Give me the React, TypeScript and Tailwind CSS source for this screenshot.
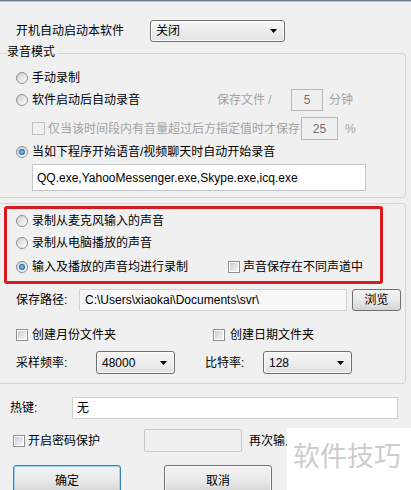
import React from 'react'

function Radio({ checked }: { checked?: boolean }) {
  return (
    <span className="flex h-[12px] w-[12px] shrink-0 items-center justify-center rounded-full border border-[#8e8f8f] bg-linear-to-br from-[#cfcfcf] to-[#ffffff]">
      {checked && <span className="h-[6px] w-[6px] rounded-full bg-radial from-[#a6dcff] via-[#2f7fc8] to-[#0a3f7a]" />}
    </span>
  )
}

function Check() {
  return (
    <span className="flex h-[12px] w-[12px] shrink-0 items-center justify-center border border-[#8f8f8f] bg-white">
      <span className="h-[8px] w-[8px] bg-linear-to-br from-[#cdcdcd] to-[#f7f7f7]" />
    </span>
  )
}

function Select({ value, w, h }: { value: string; w: string; h: string }) {
  return (
    <div className={`${w} ${h} flex items-center justify-between rounded-[3px] border border-[#707070] bg-linear-to-b from-[#f7f7f7] to-[#e2e2e2] pl-[5px] pr-[7px] shadow-[inset_0_0_0_1px_#fcfcfc]`}>
      <span>{value}</span>
      <svg width="7" height="4" viewBox="0 0 7 4">
        <path d="M0 0h7L3.5 4z" fill="#000" />
      </svg>
    </div>
  )
}

function Button({ label, main }: { label: string; main?: boolean }) {
  return (
    <div
      className={`flex h-[30px] w-[108px] items-start justify-center rounded-[3px] border pt-[8px] bg-linear-to-b from-[#f3f3f3] via-[#e9e9e9] to-[#d4d4d4] ${
        main ? 'border-[#3c7fb1] shadow-[inset_0_0_0_1px_#9fd6f2]' : 'border-[#707070] shadow-[inset_0_0_0_1px_#fbfbfb]'
      }`}
    >
      {label}
    </div>
  )
}

export default function App() {
  return (
    <div className="relative h-[490px] w-[411px] overflow-hidden bg-[#f0f0f0] text-[12px] leading-[14px] text-black font-['Liberation_Sans','Noto_Sans_CJK_SC',sans-serif]">
      <div className="h-[1px] bg-[#6d7d8f]" />
      <div className="h-[1px] bg-[#b9c6d3]" />

      <div className="mt-[18px] flex h-[22px] items-center pl-[16px]">
        <span className="w-[134px]">开机自动启动本软件</span>
        <Select value="关闭" w="w-[135px]" h="h-[22px]" />
      </div>

      {/* 录音模式 */}
      <div className="relative mr-[5px] mt-[11px] h-[145px] rounded-r-[4px] border-y border-r border-[#d5d5d5]">
        <span className="absolute left-[7px] top-[-9px] bg-[#f0f0f0] pr-[2px]">录音模式</span>
        <div className="mt-[13px] flex h-[22px] items-center pl-[16px]">
          <Radio />
          <span className="ml-[4px]">手动录制</span>
        </div>
        <div className="flex h-[22px] items-center pl-[16px]">
          <div className="flex w-[201px] items-center">
            <Radio />
            <span className="ml-[4px]">软件启动后自动录音</span>
          </div>
          <span className="w-[74px] text-[#a3a3a3]">保存文件 /</span>
          <div className="flex h-[22px] w-[32px] items-center justify-center border border-[#b8b8b8] text-[#707070]">5</div>
          <span className="ml-[6px] text-[#a3a3a3]">分钟</span>
        </div>
        <div className="mt-[6px] flex h-[23px] items-center pl-[32px]">
          <span className="flex h-[13px] w-[13px] shrink-0 border border-[#c0c0c0]" />
          <span className="ml-[3px] w-[253px] text-[#a3a3a3]">仅当该时间段内有音量超过后方指定值时才保存</span>
          <div className="flex h-[23px] w-[37px] items-center justify-center border border-[#b8b8b8] text-[#707070]">25</div>
          <span className="ml-[7px] text-[#a3a3a3]">%</span>
        </div>
        <div className="mt-[1px] flex h-[22px] items-center pl-[16px]">
          <Radio checked />
          <span className="ml-[4px]">当如下程序开始语音/视频聊天时自动开始录音</span>
        </div>
        <div className="ml-[32px] mt-[1px] h-[27px] w-[334px] border border-[#c3c7cc] bg-white pl-[4px] pt-[6px]">
          QQ.exe,YahooMessenger.exe,Skype.exe,icq.exe
        </div>
      </div>

      {/* 声音来源 / 保存 */}
      <div className="relative mr-[5px] mt-[5px] h-[181px] rounded-r-[4px] border-y border-r border-[#d5d5d5]">
        <div className="mt-[6px] flex h-[22px] items-center pl-[16px]">
          <Radio />
          <span className="ml-[4px]">录制从麦克风输入的声音</span>
        </div>
        <div className="flex h-[22px] items-center pl-[16px]">
          <Radio />
          <span className="ml-[4px]">录制从电脑播放的声音</span>
        </div>
        <div className="mt-[2px] flex h-[22px] items-center pl-[16px]">
          <div className="flex w-[212px] items-center">
            <Radio checked />
            <span className="ml-[4px]">输入及播放的声音均进行录制</span>
          </div>
          <Check />
          <span className="ml-[3px]">声音保存在不同声道中</span>
        </div>

        <div className="mt-[11px] flex h-[22px] items-center pl-[16px]">
          <span className="w-[63px]">保存路径:</span>
          <div className="flex h-[22px] w-[268px] items-center border border-[#d3d3d3] bg-[#f7f7f7] pl-[5px]">
            C:\Users\xiaokai\Documents\svr\
          </div>
          <div className="ml-[5px] flex h-[22px] w-[49px] items-center justify-center rounded-[3px] border border-[#707070] bg-linear-to-b from-[#f3f3f3] via-[#e9e9e9] to-[#d4d4d4]">
            浏览
          </div>
        </div>

        <div className="mt-[13px] flex h-[22px] items-center pl-[16px]">
          <div className="flex w-[197px] items-center">
            <Check />
            <span className="ml-[4px]">创建月份文件夹</span>
          </div>
          <Check />
          <span className="ml-[5px]">创建日期文件夹</span>
        </div>

        <div className="mt-[5px] flex h-[23px] items-center pl-[16px]">
          <span className="w-[80px]">采样频率:</span>
          <Select value="48000" w="w-[79px]" h="h-[23px]" />
          <span className="ml-[30px] w-[58px]">比特率:</span>
          <Select value="128" w="w-[89px]" h="h-[23px]" />
        </div>

        <div className="pointer-events-none absolute left-[4px] top-[2px] h-[78px] w-[379px] rounded-[3px] border-[3px] border-[#d91a1f]" />
      </div>

      <div className="mt-[13px] flex h-[22px] items-center pl-[10px]">
        <span className="w-[62px]">热键:</span>
        <div className="flex h-[22px] w-[326px] items-center border border-[#d0d0d0] bg-white pl-[4px]">无</div>
      </div>

      <div className="mt-[10px] flex h-[23px] items-center pl-[13px]">
        <div className="flex w-[131px] items-center">
          <Check />
          <span className="ml-[3px]">开启密码保护</span>
        </div>
        <div className="h-[23px] w-[98px] rounded-[2px] border border-[#c8c8c8] bg-[#f0f0f0]" />
        <span className="ml-[7px] whitespace-nowrap">再次输入</span>
      </div>

      <div className="mt-[13px] flex pl-[13px]">
        <Button label="确定" main />
        <div className="ml-[43px]">
          <Button label="取消" />
        </div>
      </div>

      <div className="absolute bottom-0 left-[287px] right-0 top-[428px] bg-white pl-[6px] pt-[13px] text-[27px] leading-[28px] text-[#cdcdcd] font-['Noto_Sans_CJK_SC',sans-serif]">
        软件技巧
      </div>
    </div>
  )
}
